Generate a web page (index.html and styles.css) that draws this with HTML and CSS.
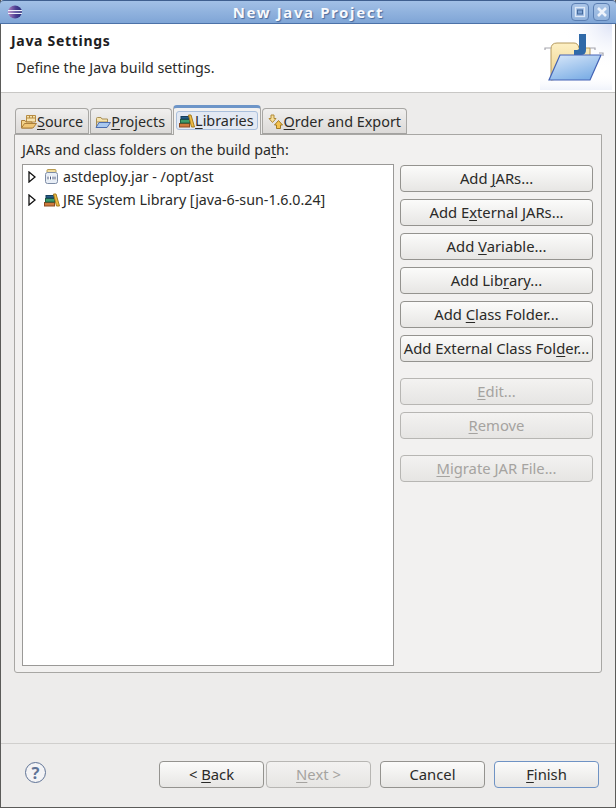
FILE: index.html
```html
<!DOCTYPE html>
<html lang="en">
<head>
<meta charset="utf-8">
<title>New Java Project</title>
<link rel="stylesheet" href="styles.css">
</head>
<body>
<div class="window">
  <header class="titlebar">
    <svg class="app-icon" width="16" height="16" viewBox="0 0 16 16"><defs><linearGradient id="ball" x1="0" y1="0" x2="1" y2="0"><stop offset="0" stop-color="#b27fbe"/><stop offset="0.55" stop-color="#4b3f93"/><stop offset="1" stop-color="#272a78"/></linearGradient></defs><ellipse cx="8" cy="8" rx="7" ry="6.500" fill="url(#ball)"/><rect x="1" y="6" width="14" height="1.200" fill="#eef0fa"/><rect x="1" y="8.800" width="14" height="1.200" fill="#eef0fa"/></svg>
    <span class="title">New Java Project</span>
    <div class="win-controls">
      <span class="win-btn"><svg width="12" height="12" viewBox="0 0 12 12"><rect x="1.500" y="1.500" width="9" height="9" fill="none" stroke="#dfe9f7" stroke-width="1.300"/><rect x="3.500" y="4" width="5" height="4" fill="#7fa3d3" stroke="#45699b"/></svg></span>
      <span class="win-btn win-btn-close"><svg width="12" height="12" viewBox="0 0 12 12"><path d="M2 2 L10 10 M10 2 L2 10" stroke="#eef3fb" stroke-width="2.600"/></svg></span>
    </div>
  </header>

  <section class="banner">
    <div class="banner-text">
      <h1 class="banner-title">Java Settings</h1>
      <p class="banner-desc">Define the Java build settings.</p>
    </div>
    <svg class="banner-icon" width="72" height="66" viewBox="0 0 72 66"><defs><radialGradient id="wash" cx="1" cy="0" r="0.700"><stop offset="0" stop-color="#dde3f6"/><stop offset="1" stop-color="#ffffff" stop-opacity="0"/></radialGradient><linearGradient id="wash2" x1="0" y1="1" x2="0" y2="0"><stop offset="0" stop-color="#f0f3fb"/><stop offset="1" stop-color="#ffffff" stop-opacity="0"/></linearGradient><linearGradient id="back" x1="0" y1="0" x2="0" y2="1"><stop offset="0" stop-color="#fdf0c4"/><stop offset="1" stop-color="#ecd08c"/></linearGradient><linearGradient id="front" x1="0" y1="0" x2="0.6" y2="1"><stop offset="0" stop-color="#dbe9fa"/><stop offset="1" stop-color="#7fb0e6"/></linearGradient></defs><rect width="72" height="66" fill="url(#wash)"/><rect y="50" width="72" height="16" fill="url(#wash2)"/><path d="M11 56 V25 Q11 19 17 19 H34 Q38 19 39 24 H50 V50 Z" fill="url(#back)" stroke="#b59a5e"/><path d="M39 10 H46 V26 Q46 31 41 31 H34 V26 H37 Q39 26 39 24 Z" fill="#2f69a8"/><path d="M5 26 V24 H11 M50 24 H55 V26" stroke="#a5a5ad" stroke-width="1.200" fill="none"/><path d="M20 31 H61 L50 56 H9 Z" fill="url(#front)" stroke="#4463b5" stroke-width="1.200"/><path d="M59 29 H63 V32" stroke="#a5a5ad" stroke-width="1.200" fill="none"/></svg>
  </section>

  <main class="content">
    <nav class="tabs">
      <div class="tab">
        <svg width="16" height="16" viewBox="0 0 16 16"><path d="M5.500 1.500 H14.500 V8 H5.500 Z M5.500 4 H14.500 M8.500 1.500 V4 M11.500 1.500 V4" fill="#f6e3ae" stroke="#b78c43"/><path d="M0.500 14 V6.500 H4 L5 8 H11 V14 Z" fill="#f3d389" stroke="#ab7f3b"/><path d="M0.500 14 L3.500 9.500 H15.500 L12 14 Z" fill="#efc676" stroke="#ab7f3b"/></svg>
        <span class="tab-label"><u>S</u>ource</span>
      </div>
      <div class="tab tab-projects">
        <svg width="16" height="16" viewBox="0 0 16 16"><path d="M1.500 13 V4.500 Q1.500 3.500 2.500 3.500 H6 L7 5 H12.500 V8 H1.500" fill="#f6e3ae" stroke="#a88f55"/><path d="M1 13.500 L4 8.500 H15.500 L12 13.500 Z" fill="#a9c8ef" stroke="#4b6cae"/></svg>
        <span class="tab-label"><u>P</u>rojects</span>
      </div>
      <div class="tab tab-active">
        <div class="tab-focus">
          <svg width="16" height="14" viewBox="0 0 16 14"><rect x="0.500" y="9.500" width="10" height="3.500" fill="#cf7a3e" stroke="#8b4a20"/><rect x="1.500" y="5.500" width="9" height="3.500" fill="#3e9c6c" stroke="#1f6343"/><rect x="2" y="2.500" width="8" height="2.500" fill="#255f88" stroke="#173e5c"/><path d="M9.500 1 H12 L15.500 13 H12.500 Z" fill="#edbd45" stroke="#a77c1f"/></svg>
          <span class="tab-label"><u>L</u>ibraries</span>
        </div>
      </div>
      <div class="tab">
        <svg width="16" height="16" viewBox="0 0 16 16"><path d="M3 1 H6 V4.500 H8 L4.500 8.500 L1 4.500 H3 Z" fill="#f8df9a" stroke="#b08a36"/><path d="M10.500 6.500 L14.500 11 H12.500 V14.500 H8.500 V11 H6.500 Z" fill="#f4c24f" stroke="#a37a22"/></svg>
        <span class="tab-label"><u>O</u>rder and Export</span>
      </div>
    </nav>

    <section class="panel">
      <div class="panel-label">JARs and class folders on the build pa<u>t</u>h:</div>
      <div class="panel-body">
        <div class="tree">
          <div class="tree-row">
            <svg class="twisty" width="8" height="12" viewBox="0 0 8 12"><path d="M1 1 L7 6 L1 11 Z" fill="#fff" stroke="#111" stroke-width="1.300"/></svg>
            <svg class="node-icon" width="16" height="16" viewBox="0 0 16 16"><rect x="3" y="0.500" width="9" height="3" rx="1" fill="#f0dc9e" stroke="#b79a52"/><rect x="1.500" y="3.500" width="12" height="11" rx="2" fill="#e8eef6" stroke="#7d8ca6"/><rect x="3" y="7" width="9" height="4" fill="#fff"/><path d="M4 7.500 V10.500 M6.500 7.500 V10.500 M9 7.500 V10.500 M11 7.500 V10.500" stroke="#44557c"/></svg>
            <span>astdeploy.jar - /opt/ast</span>
          </div>
          <div class="tree-row">
            <svg class="twisty" width="8" height="12" viewBox="0 0 8 12"><path d="M1 1 L7 6 L1 11 Z" fill="#fff" stroke="#111" stroke-width="1.300"/></svg>
            <svg class="node-icon" width="16" height="14" viewBox="0 0 16 14"><rect x="0.500" y="9.500" width="10" height="3.500" fill="#cf7a3e" stroke="#8b4a20"/><rect x="1.500" y="5.500" width="9" height="3.500" fill="#3e9c6c" stroke="#1f6343"/><rect x="2" y="2.500" width="8" height="2.500" fill="#255f88" stroke="#173e5c"/><path d="M9.500 1 H12 L15.500 13 H12.500 Z" fill="#edbd45" stroke="#a77c1f"/></svg>
            <span>JRE System Library [java-6-sun-1.6.0.24]</span>
          </div>
        </div>
        <div class="actions">
          <button class="btn">Add <u>J</u>ARs...</button>
          <button class="btn">Add E<u>x</u>ternal JARs...</button>
          <button class="btn">Add <u>V</u>ariable...</button>
          <button class="btn">Add Lib<u>r</u>ary...</button>
          <button class="btn">Add <u>C</u>lass Folder...</button>
          <button class="btn">Add External Class Fol<u>d</u>er...</button>
          <button class="btn btn-disabled btn-gap"><u>E</u>dit...</button>
          <button class="btn btn-disabled"><u>R</u>emove</button>
          <button class="btn btn-disabled btn-gap"><u>M</u>igrate JAR File...</button>
        </div>
      </div>
    </section>
  </main>

  <footer class="footer">
    <span class="help">?</span>
    <div class="nav-buttons">
      <button class="btn btn-nav">&lt; <u>B</u>ack</button>
      <button class="btn btn-nav btn-disabled btn-next"><u>N</u>ext &gt;</button>
      <button class="btn btn-nav btn-cancel">Cancel</button>
      <button class="btn btn-nav btn-default"><u>F</u>inish</button>
    </div>
  </footer>
</div>
</body>
</html>
```
FILE: styles.css
```css
* { box-sizing: border-box; }
html, body { margin: 0; padding: 0; }
body {
  width: 616px;
  height: 808px;
  overflow: hidden;
  font-family: "Noto Sans", "Open Sans", sans-serif;
  font-size: 14.250px;
  color: #2a2a28;
}
u { text-underline-offset: 2px; text-decoration-thickness: 1px; }

.window {
  width: 616px;
  height: 808px;
  display: flex;
  flex-direction: column;
  background: #edeceb;
  border: 1px solid #5b5b59;
  border-top: 0;
}

.titlebar {
  height: 24px;
  flex: none;
  margin: 0 -1px;
  display: flex;
  align-items: center;
  position: relative;
  padding: 0 6px 0 7px;
  background: linear-gradient(#a2c0e6, #7fa5d6);
  border-top: 1px solid #3f5f8f;
  border-bottom: 1px solid #4c72a8;
  border-radius: 4px 4px 0 0;
}
.title {
  position: absolute;
  left: 1px;
  right: 0;
  text-align: center;
  color: #f7f9fd;
  font-weight: 700;
  font-size: 15px;
  letter-spacing: 1.600px;
  text-shadow: 1px 1px 1px #4a6a9c;
}
.win-controls { margin-left: auto; display: flex; gap: 4px; position: relative; }
.win-btn {
  width: 18px;
  height: 18px;
  display: flex;
  align-items: center;
  justify-content: center;
  border: 1px solid #5b7fb3;
  border-radius: 4px;
  background: rgba(255, 255, 255, 0.12);
}
.win-btn-close { width: 17px; }

.banner {
  height: 69px;
  flex: none;
  display: flex;
  justify-content: space-between;
  background: #fff;
  border-bottom: 1px solid #c8c7c5;
}
.banner-title { margin: 8px 0 0 10px; font-size: 14px; font-weight: 700; letter-spacing: 0.700px; line-height: 18px; color: #20201e; }
.banner-desc { margin: 9px 0 0 15px; line-height: 18px; }
.banner-icon { margin-right: 3px; }

.content { flex: 1; min-height: 0; padding: 12px 13px 0; }

.tabs { display: flex; align-items: flex-end; gap: 1px; padding-left: 1px; height: 29px; position: relative; z-index: 1; font-size: 14.400px; }
.tab {
  height: 26px;
  display: flex;
  align-items: center;
  padding: 2px 5px 0 5px;
  background: linear-gradient(#f0efee, #dcdad8);
  border: 1px solid #a8a7a4;
  border-bottom: 1px solid #a3a2a0;
  border-radius: 4px 4px 0 0;
}
.tab-projects { padding-left: 4px; padding-right: 6px; }
.tab-label { white-space: nowrap; line-height: 18px; }
.tab-active {
  height: 30px;
  margin-bottom: -1px;
  padding: 3px 2px 0;
  align-items: flex-start;
  background: #f2f1f0;
  border: 1px solid #a8a7a4;
  border-top: 3px solid #6d95c8;
  border-bottom: 0;
}
.tab-focus {
  display: flex;
  align-items: center;
  height: 19px;
  padding: 0 3px 0 2px;
  background: #e3e9f3;
  border: 1px solid #a9bfdc;
  border-radius: 3px;
}

.panel {
  height: 539px;
  width: 588px;
  background: #f2f1f0;
  border: 1px solid #a8a7a4;
  border-radius: 0 0 3px 3px;
  padding: 6px 7px 6px 7px;
  display: flex;
  flex-direction: column;
}
.panel-label { line-height: 18px; height: 23px; }
.panel-body { flex: 1; display: flex; gap: 6px; min-height: 0; }

.tree {
  width: 372px;
  background: #fff;
  border: 1px solid #9a9997;
  padding: 0 0 0 5px;
}
.tree-row { display: flex; align-items: center; height: 23px; white-space: nowrap; }
.twisty { flex: none; margin-right: 8px; }
.node-icon { flex: none; margin-right: 3px; }

.actions { width: 193px; display: flex; flex-direction: column; gap: 7px; padding-top: 1px; }
.btn {
  height: 27px;
  width: 100%;
  flex: none;
  padding: 0 0 2px;
  font-family: inherit;
  font-size: 14.800px;
  color: #2a2a28;
  background: linear-gradient(#fbfbfa, #e7e6e4);
  border: 1px solid #94938f;
  border-radius: 4px;
  white-space: nowrap;
}
.btn-gap { margin-top: 9px; }
.btn-disabled {
  color: #a5a3a0;
  background: linear-gradient(#f3f2f1, #e6e5e3);
  border-color: #b7b6b3;
}

.footer {
  height: 64px;
  flex: none;
  display: flex;
  align-items: flex-start;
  justify-content: space-between;
  padding: 17px 16px 0 24px;
  border-top: 1px solid #d0cfcd;
}
.help {
  width: 21px;
  height: 21px;
  margin-top: 1px;
  display: flex;
  align-items: center;
  justify-content: center;
  border: 1.500px solid #5f7396;
  border-radius: 50%;
  background: #f3f3f5;
  font-size: 16.500px;
  font-weight: 700;
  line-height: 18px;
  color: #5f7396;
}
.nav-buttons { display: flex; gap: 2px; }
.btn-nav { width: 105px; }
.btn-cancel { margin-left: 7px; }
.btn-default { margin-left: 7px; border-color: #6f93c4; }
```
